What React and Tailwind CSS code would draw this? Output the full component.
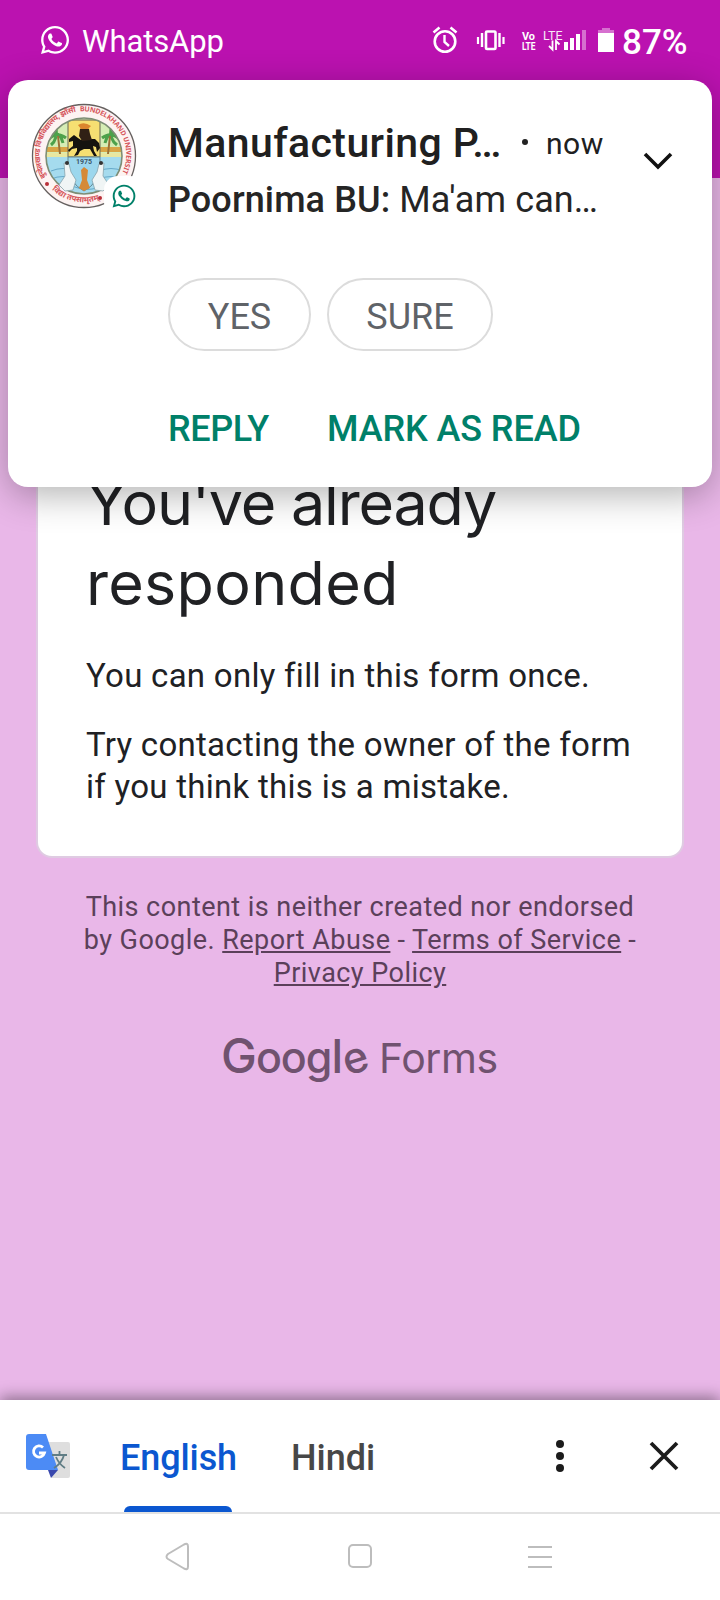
import React from "react";
import { FaWhatsapp } from "react-icons/fa";

function StatusBar() {
  return (
    <div className="flex h-[178px] shrink-0 items-start bg-[#bb12b0] text-white">
      <div className="flex h-[84px] w-full items-center pl-[39px]">
        <FaWhatsapp className="mb-[4px] h-[32px] w-[32px]" />
        <span className="ml-[11px] text-[31px] leading-[38px] tracking-[-0.1px]">WhatsApp</span>
        <svg className="ml-auto h-[40px] w-[156px]" viewBox="0 0 156 40" fill="none" stroke="white">
          <circle cx="13" cy="19.500" r="10.300" strokeWidth="2.600" />
          <path d="M12.500 13v7l4.500 4" strokeWidth="2.400" />
          <path d="M1.500 10.500l6-5M24.500 10.500l-6-5" strokeWidth="2.600" />
          <rect x="54" y="9.500" width="9.500" height="17.500" rx="1" strokeWidth="2.600" />
          <path d="M50 11v14M67.500 11v14" strokeWidth="2.400" />
          <path d="M46 15v7M71.500 15v7" strokeWidth="2.200" />
          <g fill="white" stroke="none" fontFamily="Roboto, sans-serif">
            <text x="90" y="18" fontSize="11.500" fontWeight="700" textLength="13" lengthAdjust="spacingAndGlyphs">Vo</text>
            <text x="90" y="27.500" fontSize="11.500" fontWeight="700" textLength="13.500" lengthAdjust="spacingAndGlyphs">LTE</text>
            <text x="111" y="17.500" fontSize="12.500" textLength="19.500" lengthAdjust="spacingAndGlyphs" opacity=".9">LTE</text>
            <rect x="132" y="20" width="4" height="8" />
            <rect x="138" y="16" width="4" height="12" />
            <rect x="144" y="12" width="4" height="16" />
            <rect x="150" y="8" width="4" height="20" opacity=".4" />
          </g>
          <path d="M120.500 18.500v9l-3.500-3.500M124 28v-9l3.500 3.500" strokeWidth="1.800" />
        </svg>
        <svg className="mb-[4px] ml-[10px] h-[24px] w-[16px]" viewBox="0 0 16 24" fill="white">
          <path d="M4 0h8v2h4v3H0V2h4z" opacity=".4" />
          <path d="M0 5h16v19H0z" />
        </svg>
        <span className="ml-[8px] w-[98px] pt-[2px] text-[35px] leading-[40px] font-medium">87%</span>
      </div>
    </div>
  );
}

function Avatar() {
  return (
    <div className="relative h-[106px] w-[106px]">
      <svg className="h-[106px] w-[106px]" viewBox="0 0 106 106">
        <defs>
          <path id="ringTop" d="M12 78A48 48 0 1 1 95 72" transform="translate(5.500 5.500) scale(.9)" />
          <path id="ringBottom" d="M17 82A46 46 0 0 0 82 89" />
          <clipPath id="inner"><circle cx="53" cy="53" r="38" /></clipPath>
        </defs>
        <circle cx="53" cy="53" r="51.500" fill="#fdf3f2" stroke="#65605f" strokeWidth="1.300" />
        <g clipPath="url(#inner)">
          <path d="M14 14h78v46H14z" fill="#d6edb5" />
          <path d="M14 44h78v5H14z" fill="#d9a545" />
          <path d="M14 50h78v4H14z" fill="#e9e7a0" />
          <path d="M14 54h78v40H14z" fill="#a5dbee" />
          <g stroke="#4da14b" strokeWidth="3" fill="none">
            <path d="M18 36q8-8 17-1M20 30q9-2 12 10M25 25q2 11-5 17M88 36q-8-8-17-1M86 30q-9-2-12 10M80 25q-2 11 6 17" />
          </g>
          <path d="M27 33l2 18M79 33l-2 18" stroke="#9a7137" strokeWidth="2" />
          <path d="M20 68q12-5 24 0t24 0t24 0M20 76q12-5 24 0t24 0t24 0M20 84q12-5 24 0t24 0t24 0" stroke="#66a9c9" fill="none" />
          <path d="M37 17h32v37H37z" fill="#f6df72" stroke="#686551" />
          <path d="M37 54h32v9q-1 17-16 25-15-8-16-25z" fill="#9cd7ed" stroke="#638691" />
        </g>
        <circle cx="53" cy="53" r="38" fill="none" stroke="#7d8d75" strokeWidth="1.600" />
        <path d="M38 36l5-4 4 3 3 2 8-1 6 0 4 4 1 5-3 4-1-5-3-1 1 5 3 5-3 0-4-7-6 0-4 2-2 4-4 1 3-5 0-3-5 1-3 3-1-2 5-4 0-5-4 1z" fill="#15130f" />
        <path d="M49 26l4-2 5 2 1 5 2 6-10 1-3-5z" fill="#302015" />
        <path d="M47 22q6-4 13 1l-3 3h-7z" fill="#db852d" />
        <path d="M33 60l5 1 2 8 5 8-3 10-8 1-6-6 6-9zM73 60l-5 1-2 8-5 8 3 10 8 1 6-6-6-9z" fill="#f0f5f5" stroke="#87a3ac" strokeWidth=".8" />
        <circle cx="36" cy="60" r="2" fill="#333" /><circle cx="70" cy="60" r="2" fill="#333" />
        <path d="M50 67l3-3 4 3-1 10 3 8-6 3-5-3 3-8z" fill="#d58a37" />
        <text x="45" y="61" fontFamily="Roboto, sans-serif" fontSize="7" fontWeight="700" fill="#3c5668">1975</text>
        <g fill="#d5555a" fontFamily="'Noto Sans Devanagari', 'Noto Sans', Roboto, sans-serif" fontWeight="700">
          <text fontSize="7.500"><textPath href="#ringTop" startOffset="1%" textLength="84">बुन्देलखण्ड विश्वविद्यालय, झाँसी</textPath></text>
          <text fontSize="7"><textPath href="#ringTop" startOffset="50%" textLength="94">BUNDELKHAND UNIVERSITY</textPath></text>
          <text fontSize="8"><textPath href="#ringBottom" startOffset="8%">विद्या तपसामृतम्</textPath></text>
        </g>
        <circle cx="16" cy="81" r="2" fill="#b92f38" /><circle cx="69" cy="95" r="2" fill="#b92f38" />
      </svg>
      <div className="absolute top-[73px] left-[73px] flex h-[40px] w-[40px] items-center justify-center rounded-[14px] bg-white">
        <FaWhatsapp className="h-[26px] w-[26px] text-[#008069]" />
      </div>
    </div>
  );
}

function Notification() {
  return (
    <section className="absolute top-[80px] left-[8px] h-[407px] w-[704px] rounded-[20px] bg-white shadow-[0_8px_36px_rgba(0,0,0,0.3)]">
      <div className="flex pt-[23px] pl-[23px]">
        <Avatar />
        <div className="ml-[31px] w-[450px] pt-[15px]">
          <div className="flex h-[50px] items-center whitespace-nowrap text-[#202020]">
            <span className="w-[336px] text-[41px] leading-[50px] font-medium tracking-[0.4px]">Manufacturing P…</span>
            <span className="mb-[2px] ml-[18px] h-[6px] w-[6px] rounded-full bg-[#222]" />
            <span className="ml-[18px] pt-[1px] text-[30px] leading-[50px] tracking-[0.5px]">now</span>
          </div>
          <p className="mt-[7px] text-[36px] leading-[50px] tracking-[0.1px] whitespace-nowrap text-[#252525]">
            <span className="font-medium">Poornima BU:</span> Ma'am can…
          </p>
        </div>
        <svg className="mt-[48px] ml-[24px] h-[20px] w-[32px]" viewBox="0 0 32 20" fill="none" stroke="#111" strokeWidth="3.600">
          <path d="M3 3l13 13L29 3" />
        </svg>
      </div>
      <div className="mt-[53px] flex gap-[16px] pl-[160px] text-[36px] text-[#5f6368]">
        <button className="flex h-[73px] w-[143px] items-center justify-center rounded-full border-2 border-[#dcdcdc] pt-[4px]">YES</button>
        <button className="flex h-[73px] w-[166px] items-center justify-center rounded-full border-2 border-[#dcdcdc] pt-[4px]">SURE</button>
      </div>
      <div className="mt-[53px] flex pl-[160px] text-[36px] leading-[50px] font-medium tracking-[-0.1px] whitespace-nowrap text-[#008069]">
        <button className="w-[159px] text-left tracking-[-0.4px]">REPLY</button>
        <button>MARK AS READ</button>
      </div>
    </section>
  );
}

function FormPage() {
  return (
    <main className="flex h-[1222px] shrink-0 flex-col items-center bg-[#e9b7e8]">
      <div className="h-[680px] w-[648px] rounded-b-[16px] border-2 border-t-0 border-[#dfcbe2] bg-white px-[48px] text-[#202124]">
        <h1 className="pt-[285px] font-['Inter',sans-serif] text-[61px] leading-[80px]">
          <span className="tracking-[-1.2px]">You've already</span><br />
          <span className="tracking-[0.3px]">responded</span>
        </h1>
        <p className="mt-[32px] text-[33px] leading-[42px] tracking-[0.28px] whitespace-nowrap">You can only fill in this form once.</p>
        <p className="mt-[27px] text-[33px] leading-[42px] tracking-[0.28px] whitespace-nowrap">Try contacting the owner of the form<br />if you think this is a mistake.</p>
      </div>
      <p className="mt-[33px] text-center text-[27px] leading-[33px] tracking-[0.45px] whitespace-nowrap text-[#5b405a]">
        This content is neither created nor endorsed<br />by Google. <a className="underline">Report Abuse</a> - <a className="underline">Terms of Service</a> -<br /><a className="underline">Privacy Policy</a>
      </p>
      <div className="mt-[36px] flex w-[278px] items-baseline font-['Inter',sans-serif] leading-[60px] text-[#70526f]">
        <span className="w-[158px] text-[43px] font-medium tracking-[-1px]"><span className="text-[48px]">G</span>oog<span className="text-[46px]">l</span><span className="inline-block leading-none -rotate-[18deg]">e</span></span>
        <span className="text-[41px] tracking-[-0.4px]">Forms</span>
      </div>
    </main>
  );
}

function TranslateBar() {
  return (
    <div className="relative flex h-[114px] shrink-0 border-b-2 border-[#e2e2e2] bg-white shadow-[0_-3px_14px_rgba(0,0,0,0.4)]">
      <svg className="mt-[34px] ml-[26px] h-[44px] w-[44px]" viewBox="0 0 44 44">
        <path d="M16 8h26q2 0 2 2v32q0 2-2 2H26z" fill="#dedede" />
        <path d="M22 36h10l-7 8z" fill="#3948ad" />
        <path d="M3 0h17l12 36H3q-3 0-3-3V3q0-3 3-3z" fill="#4c8bf5" />
        <path d="M26 21h15M33.500 17v4M38 21q-2 8-10 13M30 23q3 7 9 11" fill="none" stroke="#607d85" strokeWidth="1.800" />
        <path d="M17 13.500A5.600 5.600 0 1 0 18.500 19H13" fill="none" stroke="white" strokeWidth="2.800" />
      </svg>
      <div className="ml-[50px] flex w-[116px] flex-col items-center justify-between">
        <span className="pt-[33px] pl-[1px] text-[36px] leading-[50px] font-medium tracking-[-0.1px] text-[#0b57d0]">English</span>
        <span className="h-[6px] w-[108px] rounded-t-[6px] bg-[#0b57d0]" />
      </div>
      <span className="mt-[33px] ml-[55px] text-[36px] leading-[50px] font-medium text-[#474747]">Hindi</span>
      <div className="mt-[40px] mr-[40px] ml-auto flex h-[32px] items-center gap-[83px]">
        <svg className="h-[32px] w-[10px]" viewBox="0 0 10 32" fill="#1b1b1b">
          <circle cx="5" cy="4" r="4" /><circle cx="5" cy="16" r="4" /><circle cx="5" cy="28" r="4" />
        </svg>
        <svg className="h-[32px] w-[32px]" viewBox="0 0 32 32" stroke="#1b1b1b" strokeWidth="3.800">
          <path d="M3 3l26 26M29 3L3 29" />
        </svg>
      </div>
    </div>
  );
}

function NavBar() {
  return (
    <nav className="relative flex h-[86px] shrink-0 bg-white pt-[28px]">
      <svg className="ml-[164px] h-[30px] w-[28px]" viewBox="0 0 28 30" fill="none" stroke="#bdbdbd" strokeWidth="2" strokeLinejoin="round">
        <path d="M4 12L20 2.500q4-2 4 2v20q0 4-4 2L4 17q-3-2 0-5z" />
      </svg>
      <span className="mt-[2px] ml-[156px] h-[24px] w-[24px] rounded-[5px] border-2 border-[#bdbdbd]" />
      <span className="mt-[4px] ml-[156px] flex h-[22px] w-[24px] flex-col justify-between">
        <span className="h-[2px] bg-[#bdbdbd]" /><span className="h-[2px] bg-[#bdbdbd]" /><span className="h-[2px] bg-[#bdbdbd]" />
      </span>
    </nav>
  );
}

export default function App() {
  return (
    <div className="relative flex h-[1600px] w-[720px] flex-col overflow-hidden bg-white font-['Roboto',sans-serif]">
      <StatusBar />
      <FormPage />
      <TranslateBar />
      <NavBar />
      <Notification />
    </div>
  );
}
